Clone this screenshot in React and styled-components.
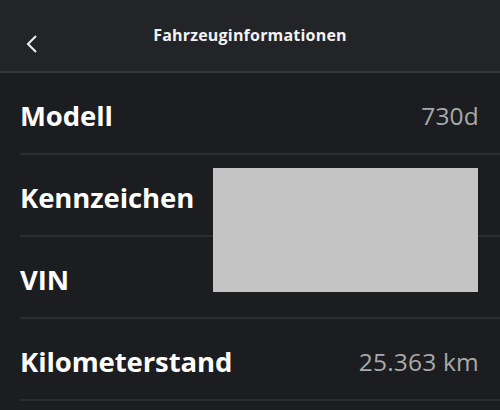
import React from "react";
import styled, { createGlobalStyle } from "styled-components";

const Global = createGlobalStyle`
  html, body {
    margin: 0;
    padding: 0;
    background: #1c1d20;
  }
  body {
    font-family: "Open Sans", "Liberation Sans", sans-serif;
    -webkit-font-smoothing: antialiased;
  }
`;

const Screen = styled.div`
  position: relative;
  width: 500px;
  height: 410px;
  overflow: hidden;
  background: #1c1d20;
`;

const Header = styled.header`
  display: flex;
  align-items: center;
  justify-content: center;
  position: relative;
  background: #232428;
  border-bottom: 2px solid #36373b;
  box-sizing: border-box;
  height: 73px;
`;

const Back = styled.button`
  position: absolute;
  left: 20px;
  top: 28px;
  width: 24px;
  height: 32px;
  padding: 0;
  border: none;
  background: none;
  display: flex;
  align-items: center;
  justify-content: center;
`;

const Title = styled.h1`
  margin: 0;
  color: #f2f2f2;
  font-size: 16px;
  font-weight: 700;
  letter-spacing: 0.2px;
  padding-bottom: 2px;
`;

const List = styled.div`
  display: flex;
  flex-direction: column;
  padding-left: 20px;
`;

const Row = styled.div`
  height: 82px;
  display: flex;
  align-items: center;
  justify-content: space-between;
  padding: 5px 21px 0 0;
  border-bottom: 2px solid #2c2d31;
  box-sizing: border-box;
`;

const Label = styled.span`
  color: #ffffff;
  font-size: 27.5px;
  font-weight: 700;
  letter-spacing: -0.1px;
`;

const Value = styled.span`
  color: #a9a9ab;
  font-size: 24.5px;
  font-weight: 400;
  letter-spacing: 0.2px;
`;

const Redact = styled.div`
  position: absolute;
  left: 213px;
  top: 168px;
  width: 265px;
  height: 124px;
  background: #c4c4c4;
`;

const rows = [
  { label: "Modell", value: "730d" },
  { label: "Kennzeichen", value: "" },
  { label: "VIN", value: "" },
  { label: "Kilometerstand", value: "25.363 km" },
];

export default function App() {
  return (
    <Screen>
      <Global />
      <Header>
        <Back aria-label="Zurück">
          <svg width="12" height="20" viewBox="0 0 12 20">
            <path d="M10 2 L2 10 L10 18" fill="none" stroke="#f0f0f0" strokeWidth="2" />
          </svg>
        </Back>
        <Title>Fahrzeuginformationen</Title>
      </Header>
      <List>
        {rows.map((r) => (
          <Row key={r.label}>
            <Label>{r.label}</Label>
            <Value>{r.value}</Value>
          </Row>
        ))}
      </List>
      <Redact />
    </Screen>
  );
}
